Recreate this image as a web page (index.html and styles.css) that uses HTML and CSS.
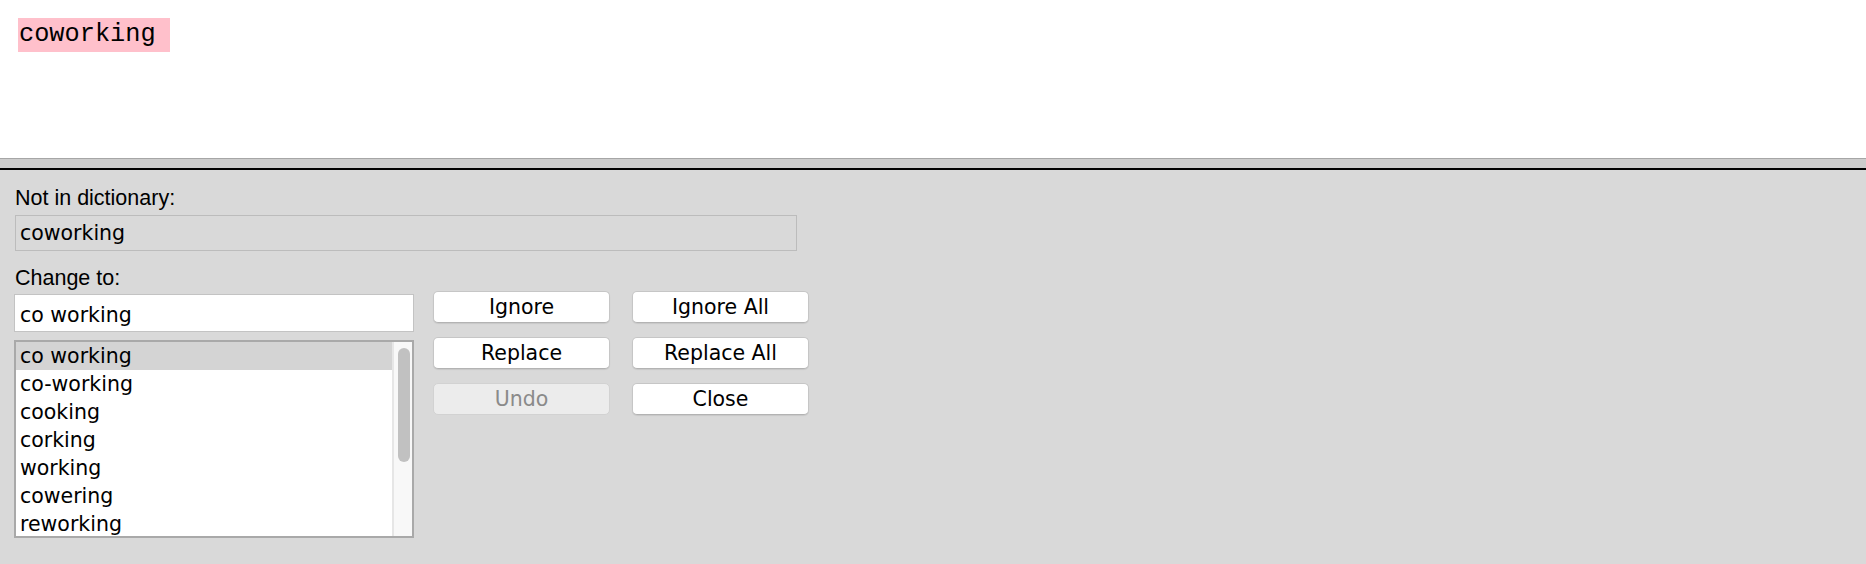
FILE: index.html
```html
<!DOCTYPE html>
<html>
<head>
<meta charset="utf-8">
<title>Spelling</title>
<link rel="stylesheet" href="styles.css">
</head>
<body>
<div class="editor">
  <span class="misspelled">coworking</span>
</div>
<div class="splitter"></div>
<div class="panel">
  <div class="label">Not in dictionary:</div>
  <div class="field">coworking</div>
  <div class="label label-change">Change to:</div>
  <div class="row">
    <div class="left">
      <div class="input">co working</div>
      <div class="list">
        <div class="items">
          <div class="item selected">co working</div>
          <div class="item">co-working</div>
          <div class="item">cooking</div>
          <div class="item">corking</div>
          <div class="item">working</div>
          <div class="item">cowering</div>
          <div class="item">reworking</div>
        </div>
        <div class="scrollbar"><div class="thumb"></div></div>
      </div>
    </div>
    <div class="buttons">
      <div class="btn">Ignore</div>
      <div class="btn">Ignore All</div>
      <div class="btn">Replace</div>
      <div class="btn">Replace All</div>
      <div class="btn disabled">Undo</div>
      <div class="btn">Close</div>
    </div>
  </div>
</div>
</body>
</html>
```
FILE: styles.css
```css
html, body {
  margin: 0;
  padding: 0;
  height: 100%;
}
body {
  background: #d9d9d9;
  font-family: "DejaVu Sans", sans-serif;
  overflow: hidden;
}
.editor {
  height: 158px;
  box-sizing: border-box;
  background: #ffffff;
  padding: 18px 0 0 18px;
}
.misspelled {
  display: inline-block;
  width: 152px;
  height: 34px;
  box-sizing: border-box;
  padding-left: 1px;
  line-height: 34px;
  background: #ffc0cb;
  font-family: "Liberation Mono", monospace;
  font-size: 25.3px;
  color: #000;
}
.splitter {
  height: 9px;
  background: #cccccc;
  border-top: 1px solid #a6a6a6;
  border-bottom: 2px solid #000;
}
.panel {
  padding: 16px 0 0 14px;
}
.label {
  font-family: "Liberation Sans", Arial, sans-serif;
  font-size: 21.5px;
  line-height: 24px;
  color: #000;
  margin-left: 1px;
}
.label-change {
  margin-top: 15px;
}
.field {
  margin: 5px 0 0 1px;
  width: 782px;
  height: 36px;
  box-sizing: border-box;
  border: 1px solid #bcbcbc;
  padding: 2px 0 0 4px;
  font-size: 20.5px;
  line-height: 30px;
  color: #000;
}
.row {
  display: flex;
  gap: 19px;
  margin-top: 4px;
}
.left {
  display: flex;
  flex-direction: column;
  gap: 8px;
  width: 400px;
}
.input {
  height: 38px;
  box-sizing: border-box;
  border: 1px solid #c3c3c3;
  background: #fff;
  padding: 5px 0 0 5px;
  font-size: 20.5px;
  line-height: 30px;
  color: #000;
}
.list {
  display: flex;
  height: 198px;
  box-sizing: border-box;
  border: 2px solid #a9a9a9;
  background: #fff;
  overflow: hidden;
}
.items {
  flex: 1;
}
.item {
  height: 28px;
  line-height: 28px;
  padding-left: 4px;
  font-size: 20.5px;
  color: #000;
  white-space: nowrap;
}
.item.selected {
  background: #d4d4d4;
}
.scrollbar {
  width: 20px;
  background: #f8f8f8;
  border-left: 2px solid #e6e6e6;
  padding: 6px 0 0 4px;
  box-sizing: border-box;
}
.thumb {
  width: 12px;
  height: 114px;
  border-radius: 6px;
  background: #c1c1c1;
}
.buttons {
  display: grid;
  grid-template-columns: 177px 177px;
  grid-auto-rows: 32px;
  column-gap: 22px;
  row-gap: 14px;
  margin-top: -3px;
  align-content: start;
}
.btn {
  box-sizing: border-box;
  background: #fff;
  border: 1px solid #c6c6c6;
  border-bottom-color: #b3b3b3;
  border-radius: 5px;
  box-shadow: 0 1px 1px rgba(0, 0, 0, 0.08);
  text-align: center;
  font-size: 20.5px;
  line-height: 30px;
  color: #000;
}
.btn.disabled {
  background: #ececec;
  border-color: #d2d2d2;
  color: #8a8a8a;
  box-shadow: none;
}
```
